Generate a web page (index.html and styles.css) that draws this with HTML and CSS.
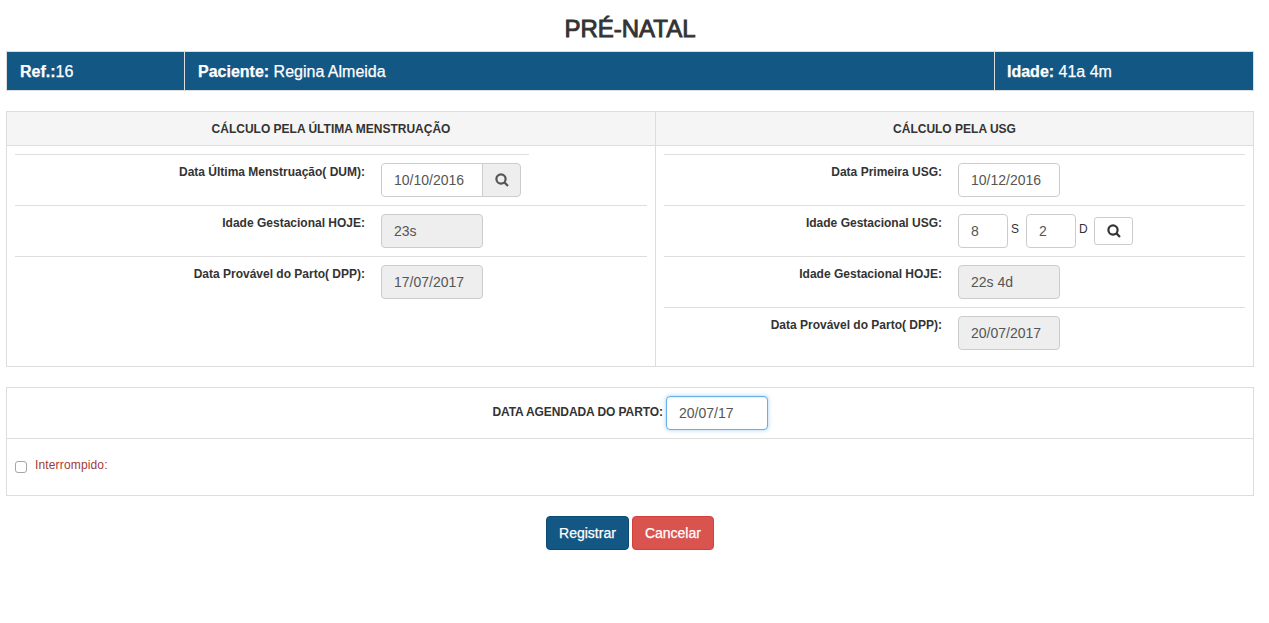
FILE: index.html
```html
<!DOCTYPE html>
<html lang="pt">
<head>
<meta charset="utf-8">
<title>Pré-Natal</title>
<link rel="stylesheet" href="styles.css">
</head>
<body>
<h1 class="title">PRÉ-NATAL</h1>
<div class="bar">
  <div class="bar-cell bar-ref"><b>Ref.:</b>16</div>
  <div class="bar-cell bar-name"><b>Paciente:</b> Regina Almeida</div>
  <div class="bar-cell bar-age"><b>Idade:</b> 41a 4m</div>
</div>
<section class="calc">
  <div class="col col-left">
    <div class="col-head">CÁLCULO PELA ÚLTIMA MENSTRUAÇÃO</div>
    <div class="rows">
      <div class="row row-short">
        <label class="lbl">Data Última Menstruação( DUM):</label>
        <div class="group">
          <span class="field field-joined">10/10/2016</span>
          <span class="addon"><svg class="ico ico-grey" viewBox="0 0 14 14"><circle cx="6" cy="6" r="4.6"/><path d="M9.4 9.4L13 13"/></svg></span>
        </div>
      </div>
      <div class="row">
        <label class="lbl">Idade Gestacional HOJE:</label>
        <span class="field field-off">23s</span>
      </div>
      <div class="row">
        <label class="lbl">Data Provável do Parto( DPP):</label>
        <span class="field field-off">17/07/2017</span>
      </div>
    </div>
  </div>
  <div class="col col-right">
    <div class="col-head">CÁLCULO PELA USG</div>
    <div class="rows">
      <div class="row">
        <label class="lbl">Data Primeira USG:</label>
        <span class="field">10/12/2016</span>
      </div>
      <div class="row">
        <label class="lbl">Idade Gestacional USG:</label>
        <div class="ig">
          <span class="field field-num">8</span><span class="unit">S</span>
          <span class="field field-num">2</span><span class="unit">D</span>
          <span class="btn-search"><svg class="ico ico-dark" viewBox="0 0 14 14"><circle cx="6" cy="6" r="4.6"/><path d="M9.4 9.4L13 13"/></svg></span>
        </div>
      </div>
      <div class="row">
        <label class="lbl">Idade Gestacional HOJE:</label>
        <span class="field field-off">22s 4d</span>
      </div>
      <div class="row">
        <label class="lbl">Data Provável do Parto( DPP):</label>
        <span class="field field-off">20/07/2017</span>
      </div>
    </div>
  </div>
</section>
<section class="sched">
  <div class="sched-top">
    <label class="sched-lbl">DATA AGENDADA DO PARTO:</label>
    <span class="field field-focus">20/07/17</span>
  </div>
  <div class="sched-bottom">
    <span class="check"></span><span class="check-lbl">Interrompido:</span>
  </div>
</section>
<div class="actions">
  <span class="btn btn-blue">Registrar</span>
  <span class="btn btn-red">Cancelar</span>
</div>
</body>
</html>
```
FILE: styles.css
```css
* { box-sizing: border-box; }
html, body { margin: 0; padding: 0; }
body {
  padding: 0 15px 0 6px;
  background: #fff;
  color: #333;
  font-family: "Liberation Sans", Arial, sans-serif;
  font-size: 14px;
  overflow: hidden;
}
.title {
  margin: 0;
  height: 51px;
  padding-top: 15px;
  text-align: center;
  font-size: 24px;
  line-height: 28px;
  font-weight: normal;
  -webkit-text-stroke: 0.9px #333;
  color: #333;
}
.bar {
  display: flex;
  height: 40px;
  background: #135785;
  border: 1px solid #ddd;
  color: #fff;
  font-size: 16px;
  line-height: 40px;
  -webkit-text-stroke: 0.25px #fff;
}
.bar-cell { padding-left: 13px; border-right: 1px solid #ddd; }
.bar-ref { width: 178px; }
.bar-name { width: 810px; }
.bar-age { flex: 1; border-right: 0; padding-left: 12px; }
.calc {
  display: flex;
  height: 256px;
  margin-top: 20px;
  border: 1px solid #ddd;
}
.col-left { width: 649px; border-right: 1px solid #ddd; }
.col-right { flex: 1; }
.col-head {
  height: 34px;
  background: #f5f5f5;
  border-bottom: 1px solid #ddd;
  text-align: center;
  font-size: 12px;
  font-weight: bold;
  line-height: 34px;
}
.rows { padding: 8px 8px 0; }
.row {
  display: flex;
  height: 51px;
  padding-top: 8px;
  border-top: 1px solid #ddd;
}
.row-short { position: relative; border-top: 0; padding-top: 9px; }
.row-short::before {
  content: "";
  position: absolute;
  top: 0;
  left: 0;
  width: 514px;
  border-top: 1px solid #ddd;
}
.lbl {
  width: 350px;
  padding-top: 1px;
  text-align: right;
  font-size: 12px;
  font-weight: bold;
  line-height: 17px;
}
.col-right .lbl { width: 278px; }
.group { display: flex; margin-left: 16px; }
.field {
  display: block;
  width: 102px;
  height: 34px;
  padding: 6px 12px;
  border: 1px solid #ccc;
  border-radius: 4px;
  background: #fff;
  color: #555;
  font-size: 14px;
  line-height: 20px;
}
.row > .field, .ig { margin-left: 16px; }
.field-joined { border-radius: 4px 0 0 4px; }
.field-off { background: #eee; }
.addon {
  display: flex;
  align-items: center;
  justify-content: center;
  width: 39px;
  height: 34px;
  margin-left: -1px;
  background: #eee;
  border: 1px solid #ccc;
  border-radius: 0 4px 4px 0;
}
.ico { width: 14px; height: 14px; fill: none; stroke-width: 2.2; }
.ico-grey { stroke: #555; }
.ico-dark { stroke: #333; }
.ig { display: flex; }
.field-num { width: 50px; }
.unit { width: 18px; padding-left: 3px; font-size: 12px; line-height: 17px; padding-top: 7px; color: #333; }
.btn-search {
  display: flex;
  align-items: center;
  justify-content: center;
  width: 39px;
  height: 28px;
  margin: 3px 0 0 0;
  border: 1px solid #ccc;
  border-radius: 3px;
}
.sched {
  height: 109px;
  margin-top: 20px;
  border: 1px solid #ddd;
}
.sched-top {
  display: flex;
  justify-content: center;
  height: 51px;
  padding: 8px 2px 0 0;
  border-bottom: 1px solid #ddd;
}
.sched-lbl { font-size: 12px; font-weight: bold; line-height: 17px; padding-top: 8px; width: 173px; letter-spacing: -0.08px; text-align: right; margin-right: 3px; white-space: nowrap; }
.field-focus {
  border-color: #66afe9;
  box-shadow: inset 0 1px 1px rgba(0,0,0,.075), 0 0 4px rgba(102,175,233,.6);
}
.sched-bottom { display: flex; padding: 18px 0 0 8px; }
.check {
  width: 12px;
  height: 12px;
  margin-top: 4px;
  border: 1px solid #a6a6a6;
  border-radius: 3px;
  background: #fff;
}
.check-lbl { margin-left: 8px; color: #a33a38; font-size: 12px; line-height: 17px; letter-spacing: 0.15px; }
.actions { display: flex; justify-content: center; gap: 3px; margin-top: 20px; }
.btn {
  height: 34px;
  padding: 6px 12px;
  border: 1px solid;
  border-radius: 4px;
  color: #fff;
  font-size: 14px;
  line-height: 20px;
  -webkit-text-stroke: 0.25px #fff;
}
.btn-blue { background: #135785; border-color: #0f4a72; }
.btn-red { background: #d9534f; border-color: #d43f3a; }
```
